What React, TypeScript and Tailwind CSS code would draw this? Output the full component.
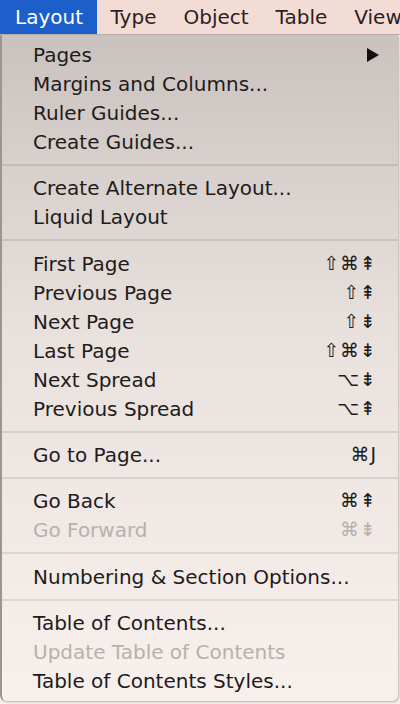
import React from 'react'

type Item =
  | { kind: 'item'; label: string; shortcut?: string; disabled?: boolean; submenu?: boolean }
  | { kind: 'sep'; tall?: boolean }

const items: Item[] = [
  { kind: 'item', label: 'Pages', submenu: true },
  { kind: 'item', label: 'Margins and Columns...' },
  { kind: 'item', label: 'Ruler Guides...' },
  { kind: 'item', label: 'Create Guides...' },
  { kind: 'sep' },
  { kind: 'item', label: 'Create Alternate Layout...' },
  { kind: 'item', label: 'Liquid Layout' },
  { kind: 'sep', tall: true },
  { kind: 'item', label: 'First Page', shortcut: '⇧⌘⇞' },
  { kind: 'item', label: 'Previous Page', shortcut: '⇧⇞' },
  { kind: 'item', label: 'Next Page', shortcut: '⇧⇟' },
  { kind: 'item', label: 'Last Page', shortcut: '⇧⌘⇟' },
  { kind: 'item', label: 'Next Spread', shortcut: '⌥⇟' },
  { kind: 'item', label: 'Previous Spread', shortcut: '⌥⇞' },
  { kind: 'sep' },
  { kind: 'item', label: 'Go to Page...', shortcut: '⌘J' },
  { kind: 'sep' },
  { kind: 'item', label: 'Go Back', shortcut: '⌘⇞' },
  { kind: 'item', label: 'Go Forward', shortcut: '⌘⇟', disabled: true },
  { kind: 'sep', tall: true },
  { kind: 'item', label: 'Numbering & Section Options...' },
  { kind: 'sep' },
  { kind: 'item', label: 'Table of Contents...' },
  { kind: 'item', label: 'Update Table of Contents', disabled: true },
  { kind: 'item', label: 'Table of Contents Styles...' },
]

const menus = ['Layout', 'Type', 'Object', 'Table', 'View']

function App() {
  return (
    <div className="w-[400px] h-[704px] overflow-hidden bg-[#f6eeea] font-['DejaVu_Sans',sans-serif]">
      {/* menu bar */}
      <div className="flex h-[35px] bg-[#f3dcd5] border-b border-[#b9afab] text-[20px] leading-[34px] text-[#2b1f1f] whitespace-nowrap">
        {menus.map((m, i) => (
          <div key={m} className={i === 0 ? 'pl-[15px] pr-[14px] bg-[#1c5fcb] text-white' : 'px-[13.5px]'}>
            {m}
          </div>
        ))}
      </div>

      {/* dropdown */}
      <div className="w-[398px] h-[666px] pt-[5px] pb-[5px] border-l-2 border-[#9b9491] rounded-b-[6px] bg-linear-to-b from-[#c9c2bf] from-0% via-[#e9e1dd] via-45% to-[#f8f0ec] to-100% shadow-[1px_1px_2px_rgba(0,0,0,0.25)]">
        {items.map((it, idx) =>
          it.kind === 'sep' ? (
            <div key={idx} className={it.tall ? 'h-[18px] flex items-center' : 'h-[17px] flex items-center'}>
              <div className="w-full h-[2px] bg-[#000]/[0.09]" />
            </div>
          ) : (
            <div
              key={idx}
              className={
                'flex items-center h-[29px] pl-[31px] pr-[21px] text-[20px] ' +
                (it.disabled ? 'text-[#b8b0ad]' : 'text-[#221b1b]')
              }
            >
              <span className="flex-1 whitespace-nowrap">{it.label}</span>
              {it.shortcut && <span className="text-[19px] tracking-[1px]">{it.shortcut}</span>}
              {it.submenu && (
                <svg width="12" height="14" viewBox="0 0 12 14" className="mr-[-2px]">
                  <path d="M0 0 L12 7 L0 14 Z" fill="#151010" />
                </svg>
              )}
            </div>
          )
        )}
      </div>
    </div>
  )
}

export default App
